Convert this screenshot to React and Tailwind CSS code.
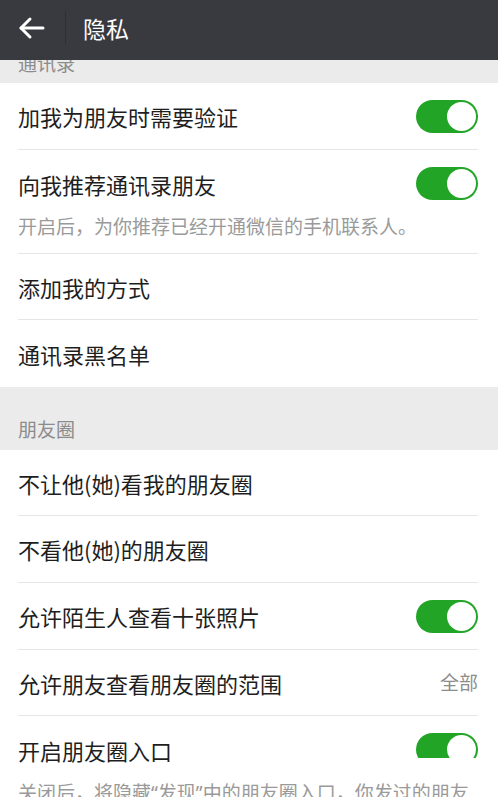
import React from 'react';

const font = { fontFamily: '"Noto Sans CJK SC", "Noto Sans", sans-serif' };
const latin = { fontFamily: '"Noto Sans", sans-serif' };

const Toggle = ({ clip }) => (
  <div className={clip ? 'h-[33px] w-[62px] shrink-0' : 'w-[62px] shrink-0'}>
    <div className={clip ? 'h-[25px] overflow-hidden' : ''}>
      <div className="w-[62px] h-[33px] rounded-full bg-[#22a526] flex items-center justify-end pr-[2px]">
        <div className="w-[29px] h-[29px] rounded-full bg-white" />
      </div>
    </div>
  </div>
);

const Row = ({ title, toggle, value, last, tall }) => (
  <div className="pl-[18px] pr-[20px]">
    <div
      className={`flex items-center justify-between ${tall ? 'h-[67px]' : 'h-[66px]'} ${
        last ? '' : 'border-b border-[#e6e6e6]'
      }`}
    >
      <span className="text-[22px] leading-[30px] text-[#1e1e1e]">{title}</span>
      {toggle && <Toggle />}
      {value && <span className="text-[19px] text-[#8c8c8c]">{value}</span>}
    </div>
  </div>
);

const DescRow = ({ title, desc, clip, last }) => (
  <div className="pl-[18px] pr-[20px]">
    <div className={`pt-[17px] pb-[14px] ${last ? '' : 'border-b border-[#e6e6e6]'}`}>
      <div className="flex items-center justify-between h-[33px]">
        <span className="text-[22px] leading-[30px] text-[#1e1e1e]">{title}</span>
        <Toggle clip={clip} />
      </div>
      <div className="mt-[13px] text-[19px] leading-[26px] text-[#9a9a9a]">{desc}</div>
    </div>
  </div>
);

export default function App() {
  return (
    <div className="w-[498px] h-[797px] overflow-hidden bg-white" style={font}>
      <div className="h-[60px] bg-[#393a3f] flex items-center">
        <div className="w-[65px] flex justify-center pr-[1px]">
          <svg width="28" height="24" viewBox="0 0 28 24" fill="none" stroke="white" strokeWidth="3" strokeLinecap="round" strokeLinejoin="round" className="-mt-[4px]">
            <path d="M25 12H3" />
            <path d="M12 3L3 12l9 9" />
          </svg>
        </div>
        <div className="w-px h-[33px] bg-[#2e2f33] -mt-[6px]" />
        <span className="ml-[17px] text-[23px] text-white -mt-[4px]">隐私</span>
      </div>

      <div className="h-[23px] overflow-hidden bg-[#ebebeb] pl-[18px]">
        <div className="-mt-[7px] text-[19px] leading-[20px] text-[#8c8c8c]">通讯录</div>
      </div>

      <Row title="加我为朋友时需要验证" toggle tall />
      <DescRow title="向我推荐通讯录朋友" desc="开启后，为你推荐已经开通微信的手机联系人。" />
      <Row title="添加我的方式" />
      <Row title="通讯录黑名单" last tall />

      <div className="h-[63px] bg-[#ebebeb] pl-[18px] flex items-end pb-[10px]">
        <span className="text-[19px] leading-[22px] text-[#8c8c8c]">朋友圈</span>
      </div>

      <Row title="不让他(她)看我的朋友圈" />
      <Row title="不看他(她)的朋友圈" tall />
      <Row title="允许陌生人查看十张照片" toggle tall />
      <Row title="允许朋友查看朋友圈的范围" value="全部" />
      <DescRow
        title="开启朋友圈入口"
        desc={
          <>
            关闭后，将隐藏<span style={latin}>“</span>发现<span style={latin}>”</span>中的朋友圈入口，你发过的朋友圈不会被删除。
          </>
        }
        clip
        last
      />
    </div>
  );
}
